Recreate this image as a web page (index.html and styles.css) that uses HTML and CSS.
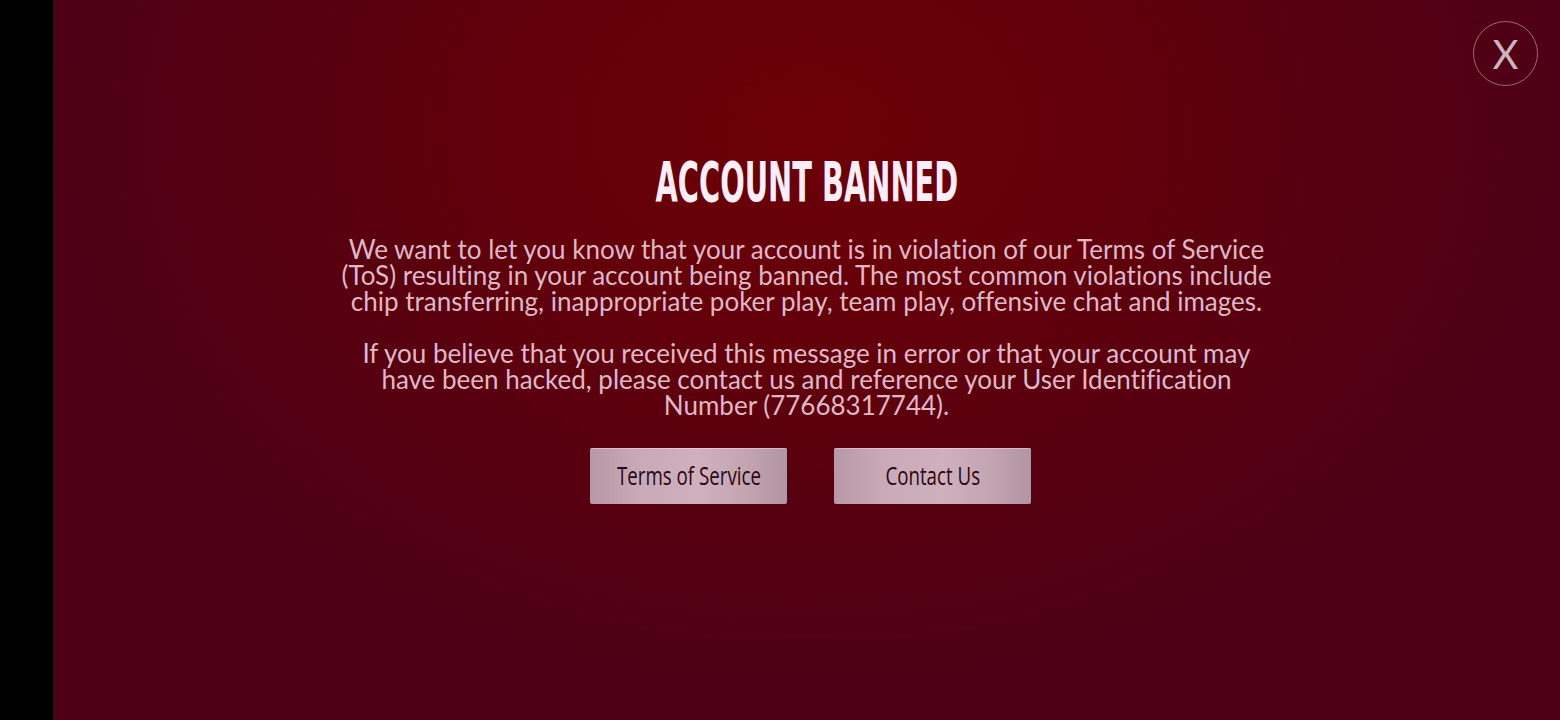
FILE: index.html
```html
<!DOCTYPE html>
<html lang="en">
<head>
<meta charset="utf-8">
<link rel="stylesheet" href="styles.css">
</head>
<body>
<div class="screen">
  <div class="side"></div>
  <main class="stage">
    <button class="close" aria-label="Close">X</button>
    <section class="dialog">
      <h1 class="title">ACCOUNT BANNED</h1>
      <p class="msg">We want to let you know that your account is in violation of our Terms of Service (ToS) resulting in your account being banned. The most common violations include chip transferring, inappropriate poker play, team play, offensive chat and images.</p>
      <p class="msg">If you believe that you received this message in error or that your account may have been hacked, please contact us and reference your User Identification Number (77668317744).</p>
      <div class="actions">
        <button class="btn"><span class="btn-label">Terms of Service</span></button>
        <button class="btn"><span class="btn-label">Contact Us</span></button>
      </div>
    </section>
  </main>
</div>
</body>
</html>
```

FILE: styles.css
```css
* { box-sizing: border-box; }
html, body { margin: 0; padding: 0; height: 100%; }
body { background: #000; overflow: hidden; }
.screen { display: flex; width: 1560px; height: 720px; }
.side { width: 53px; background: #000; flex: none; }
.stage {
  position: relative;
  flex: 1;
  background: radial-gradient(ellipse 760px 560px at 50% 18%, #6c0008 0%, #650009 30%, #58000f 65%, #4e0016 100%);
  display: flex;
  justify-content: center;
}
.close {
  position: absolute;
  top: 21px;
  right: 22px;
  width: 65px;
  height: 65px;
  border-radius: 50%;
  border: 1.5px solid #9a6a7c;
  background: transparent;
  color: #cdb3c0;
  font-family: Lato, "DejaVu Sans", sans-serif;
  font-weight: 400;
  font-size: 40px;
  line-height: 1;
  padding: 0;
  display: flex;
  align-items: center;
  justify-content: center;
}
.dialog {
  width: 940px;
  padding-top: 152px;
  display: flex;
  flex-direction: column;
  align-items: center;
  text-align: center;
}
.title {
  margin: 0 0 24px;
  font-family: "DejaVu Sans", sans-serif;
  font-weight: bold;
  font-size: 56px;
  line-height: 60px;
  color: #fbeef6;
  transform: scaleX(0.515);
  white-space: nowrap;
}
.msg {
  margin: 0 0 26px;
  font-family: Lato, "Liberation Sans", sans-serif;
  font-size: 26px;
  line-height: 26px;
  color: #dfb8c6;
  font-variant-ligatures: none;
}
.actions {
  display: flex;
  gap: 47px;
  margin-top: 4px;
  padding-left: 8px;
}
.btn {
  width: 197px;
  height: 56px;
  border: none;
  border-radius: 2px;
  background: linear-gradient(90deg, #b898a6 0%, #c9aab6 25%, #ceb1bc 55%, #c2a5b1 80%, #b294a2 100%);
  box-shadow: inset 0 1px 0 rgba(255,255,255,0.35);
  color: #2a0712;
  padding: 0;
  display: flex;
  align-items: center;
  justify-content: center;
}
.btn-label {
  display: inline-block;
  font-family: "Open Sans", sans-serif;
  font-size: 26px;
  line-height: 1;
  transform: scaleX(0.72);
  white-space: nowrap;
  margin-top: -3px;
}
```
